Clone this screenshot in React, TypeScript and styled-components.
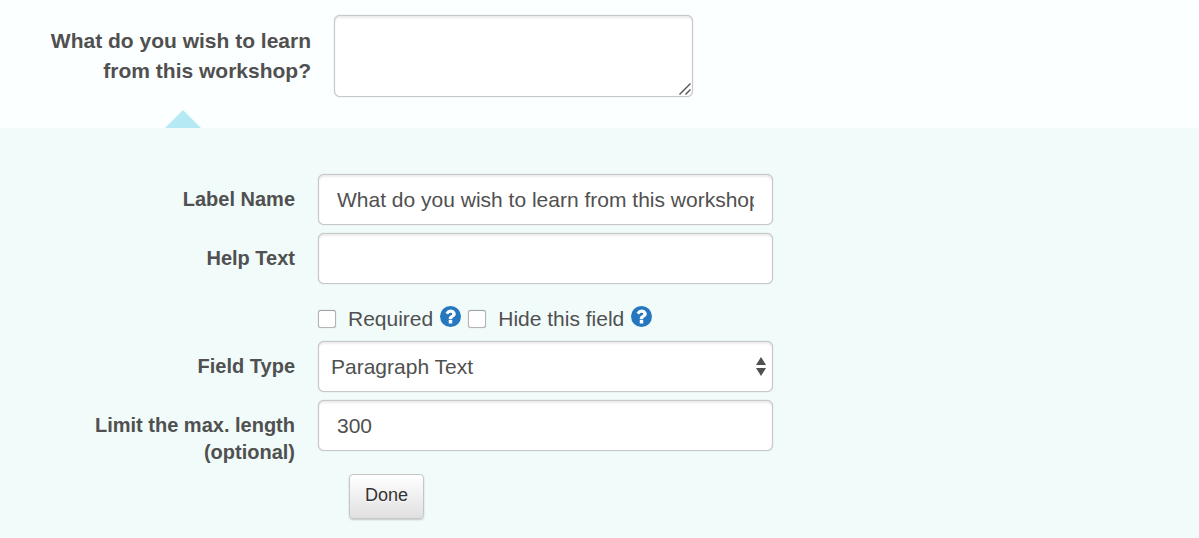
import React from "react";
import styled, { createGlobalStyle } from "styled-components";

const GlobalStyle = createGlobalStyle`
  *, *::before, *::after { box-sizing: border-box; }
  body {
    margin: 0;
    background: #f1fbfa;
    color: #505050;
    font-family: "Liberation Sans", Arial, sans-serif;
    font-size: 21px;
  }
`;

const Preview = styled.section`
  position: relative;
  display: flex;
  gap: 23px;
  min-height: 128px;
  padding: 15px 16px 31px 40px;
  background: #fcffff;
`;

const PreviewLabel = styled.label`
  flex: 0 0 271px;
  padding-top: 11px;
  font-weight: bold;
  line-height: 30px;
  text-align: right;
`;

const Pointer = styled.span`
  position: absolute;
  left: 165px;
  bottom: 0;
  border: solid transparent;
  border-width: 0 18px 18px;
  border-bottom-color: #b5eaf4;
`;

const controlStyle = `
  display: block;
  width: 100%;
  border: 1px solid #c8c8cc;
  border-radius: 6px;
  background: #fff;
  box-shadow: inset 0 2px 2px rgba(0, 0, 0, 0.08), 0 0 1px rgba(0, 0, 0, 0.3);
  color: #505050;
  font: inherit;
  outline: none;
`;

const PreviewBox = styled.div`
  position: relative;
  flex: 0 1 359px;
  min-width: 0;
`;

const PreviewArea = styled.textarea`
  ${controlStyle}
  height: 82px;
  padding: 8px 12px;
  resize: vertical;

  &::-webkit-resizer {
    background: transparent;
  }
`;

const Grip = styled.svg`
  position: absolute;
  right: 2px;
  bottom: 2px;
  width: 12px;
  height: 12px;
  fill: none;
  stroke: #505050;
  pointer-events: none;
`;

const Settings = styled.form`
  display: flex;
  flex-direction: column;
  gap: 8px;
  padding: 46px 16px 19px 40px;
`;

const Row = styled.div`
  display: flex;
  gap: 23px;
`;

const RowLabel = styled.label`
  flex: 0 0 255px;
  padding-top: 12px;
  font-size: 20px;
  font-weight: bold;
  line-height: 27px;
  text-align: right;
`;

const FieldBox = styled.div`
  position: relative;
  flex: 0 1 455px;
  min-width: 0;
`;

const TextInput = styled.input`
  ${controlStyle}
  height: 51px;
  padding: 0 18px;
`;

const Select = styled.select`
  ${controlStyle}
  appearance: none;
  height: 51px;
  padding: 0 32px 0 12px;
`;

const SelectArrows = styled.svg`
  position: absolute;
  top: 16px;
  right: 7px;
  width: 10px;
  height: 19px;
  fill: #505050;
  pointer-events: none;
`;

const Options = styled.div`
  display: flex;
  flex-wrap: wrap;
  align-items: center;
  gap: 7px;
  min-height: 41px;
  padding-top: 12px;
  margin-left: 278px;
`;

const Option = styled.label`
  display: flex;
  align-items: center;
  gap: 12px;
  line-height: 28px;
`;

const Checkbox = styled.input`
  appearance: none;
  width: 18px;
  height: 18px;
  margin: 0;
  border: 1px solid #b4b4b4;
  border-top-color: #a0a0a0;
  border-radius: 3px;
  background: #fff;
  box-shadow: 0 0 1px rgba(0, 0, 0, 0.3);

  &:checked {
    background: #2577bf;
  }
`;

const HelpButton = styled.button`
  display: flex;
  padding: 0 0 4px;
  border: 0;
  background: none;
  color: #2577bf;
  cursor: pointer;

  svg {
    width: 21px;
    height: 21px;
    fill: currentColor;
  }
`;

const DoneButton = styled.button`
  align-self: flex-start;
  height: 45px;
  margin-left: 309px;
  padding: 0 15px 2px;
  border: 1px solid #c6c6c8;
  border-radius: 4px;
  background: linear-gradient(#fff, #e0e0e0);
  box-shadow: 0 1px 2px rgba(0, 0, 0, 0.2);
  color: #333;
  font: inherit;
  font-size: 18px;
  text-shadow: 0 1px 1px rgba(255, 255, 255, 0.8);
  cursor: pointer;
`;

function Help({ label }: { label: string }) {
  return (
    <HelpButton type="button" aria-label={label}>
      <svg viewBox="128 128 1536 1536" aria-hidden="true">
        <circle cx="896" cy="896" r="768" />
        <path
          fill="#fff"
          d="M1024 1376v-192q0-14-9-23t-23-9h-192q-14 0-23 9t-9 23v192q0 14 9 23t23 9h192q14 0 23-9t9-23zm256-672q0-88-55.500-163t-138.500-116-170-41q-243 0-371 213-15 24 8 42l132 100q7 6 19 6 16 0 25-12 53-68 86-92 34-24 86-24 48 0 85.500 26t37.500 59q0 38-20 61t-68 45q-63 28-115.500 86.500t-52.500 125.500v36q0 14 9 23t23 9h192q14 0 23-9t9-23q0-19 21.500-49.500t54.500-49.500q32-18 49-28.500t46-35 44.500-48 28-60.500 12.500-81z"
        />
      </svg>
    </HelpButton>
  );
}

export default function App() {
  return (
    <main>
      <GlobalStyle />
      <Preview>
        <PreviewLabel htmlFor="answer">What do you wish to learn from this workshop?</PreviewLabel>
        <PreviewBox>
          <PreviewArea id="answer" />
          <Grip viewBox="0 0 12 12" aria-hidden="true">
            <path d="M0.500 11.500L11.500 0.500M6.500 11.500L11.500 6.500" strokeWidth="1.400" />
          </Grip>
        </PreviewBox>
        <Pointer />
      </Preview>
      <Settings onSubmit={(e) => e.preventDefault()}>
        <Row>
          <RowLabel htmlFor="label-name">Label Name</RowLabel>
          <FieldBox>
            <TextInput id="label-name" defaultValue="What do you wish to learn from this workshop?" />
          </FieldBox>
        </Row>
        <Row>
          <RowLabel htmlFor="help-text">Help Text</RowLabel>
          <FieldBox>
            <TextInput id="help-text" />
          </FieldBox>
        </Row>
        <Options>
          <Option>
            <Checkbox type="checkbox" />
            Required
          </Option>
          <Help label="About required fields" />
          <Option>
            <Checkbox type="checkbox" />
            Hide this field
          </Option>
          <Help label="About hidden fields" />
        </Options>
        <Row>
          <RowLabel htmlFor="field-type">Field Type</RowLabel>
          <FieldBox>
            <Select id="field-type">
              <option>Paragraph Text</option>
            </Select>
            <SelectArrows viewBox="0 0 10 19" aria-hidden="true">
              <path d="M5 0L10 8H0zM0 11H10L5 19z" />
            </SelectArrows>
          </FieldBox>
        </Row>
        <Row>
          <RowLabel htmlFor="max-length">Limit the max. length (optional)</RowLabel>
          <FieldBox>
            <TextInput id="max-length" defaultValue="300" />
          </FieldBox>
        </Row>
        <DoneButton type="submit">Done</DoneButton>
      </Settings>
    </main>
  );
}
